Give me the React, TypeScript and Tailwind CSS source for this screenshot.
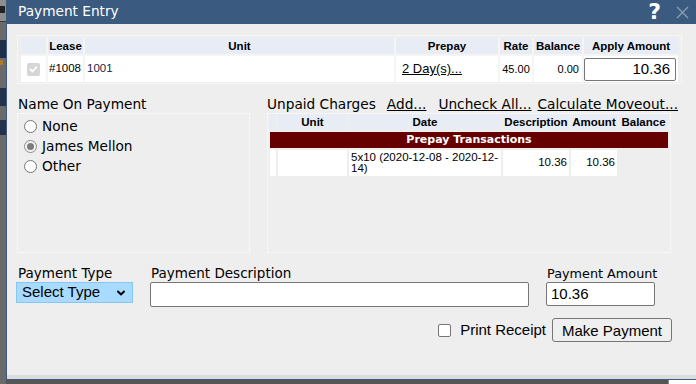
import { ChevronDown } from 'lucide-react';

const verdana = "font-['DejaVu_Sans',sans-serif]";
const arial = "font-['Liberation_Sans',Arial,sans-serif]";

const leaseCols = ['', 'Lease', 'Unit', 'Prepay', 'Rate', 'Balance', 'Apply Amount'];
const chargeCols = ['', 'Unit', 'Date', 'Description', 'Amount', 'Balance'];

function Radio({ checked }: { checked?: boolean }) {
  return (
    <span className={`w-[13px] h-[13px] rounded-full border flex items-center justify-center ${checked ? 'border-[#8a8a8a] bg-[#f4f4f4]' : 'border-[#767676] bg-white'}`}>
      {checked && <span className="w-[7px] h-[7px] rounded-full bg-[#7b7b7b]" />}
    </span>
  );
}

export default function App() {
  return (
    <div className="w-[696px] h-[384px] flex bg-[#5a5a5a] overflow-hidden">
      {/* sliver of the page behind the dialog */}
      <div className="w-[6px] flex flex-col bg-[#6a6a6a]">
        <div className="h-[22px] bg-[#8d8d8d] border-b border-[#3d3d3d] pt-[6px]"><div className="w-[5px] h-[7px] bg-[#222]" /></div>
        <div className="h-[18px]" />
        <div className="h-[18px] bg-[#1f2d4a]" />
        <div className="h-[8px] flex items-center"><span className="w-[3px] h-[5px] bg-[#b07a2a]" /></div>
        <div className="h-[22px]" />
        <div className="h-[18px] bg-[#23314f]" />
        <div className="h-[14px]" />
        <div className="h-[15px] bg-[#23314f]" />
        <div className="flex-1" />
      </div>

      <div className="flex-1 flex flex-col">
        <div className="h-[380px] flex flex-col border-l border-b border-[#3d5a7d] bg-[#eeeeee]">
          {/* title bar */}
          <div className="h-[24px] bg-[#3a5a7f] flex items-center pl-[11px] pr-[6px]">
            <span className={`${verdana} text-[13.7px] text-white leading-none`}>Payment Entry</span>
            <span className={`ml-auto ${verdana} text-[22px] font-bold text-white leading-none mr-[15px]`}>?</span>
            <svg width="13" height="13" viewBox="0 0 13 13" className="mr-[1px]">
              <path d="M1 1 L12 12 M12 1 L1 12" stroke="#8c9cb1" strokeWidth="1.4" />
            </svg>
          </div>

          <div className="flex-1 flex flex-col pt-[11px] pl-[10px] pr-[14px]">
            {/* lease table */}
            <div className="border border-dotted border-white px-[3px] pt-[2px] pb-[1px]">
              <div className={`grid grid-cols-[25px_35px_309px_102px_32px_48px_94px] gap-[2px] bg-[#f5f5f5] ${arial} text-black`}>
                {leaseCols.map((c, i) => (
                  <div key={i} className="h-[16px] bg-[#e8edf5] text-[11.5px] font-bold leading-[16px] text-center whitespace-nowrap">{c}</div>
                ))}
                <div className="h-[26px] bg-white flex items-center justify-center">
                  <span className="w-[13px] h-[13px] rounded-[2px] bg-[#d6d6d6] flex items-center justify-center">
                    <svg width="9" height="8" viewBox="0 0 9 8"><path d="M1 4 L3.5 6.5 L8 1.5" stroke="white" strokeWidth="1.8" fill="none" /></svg>
                  </span>
                </div>
                <div className="h-[26px] bg-white flex items-center pl-[1px] text-[11.5px]">#1008</div>
                <div className="h-[26px] bg-white flex items-center pl-[2px] text-[11.5px] text-[#1a2440]">1001</div>
                <div className="h-[26px] bg-white flex items-center pl-[6px] text-[13px] underline">2 Day(s)...</div>
                <div className="h-[26px] bg-white flex items-center justify-center text-[11px]">45.00</div>
                <div className="h-[26px] bg-white flex items-center justify-end pr-[3px] text-[11px]">0.00</div>
                <div className="h-[26px] bg-white flex items-center">
                  <div className="w-[92px] h-[23px] border border-[#767676] rounded-[2px] flex items-center justify-end pr-[5px] text-[15px]">10.36</div>
                </div>
              </div>
            </div>

            {/* name on payment + unpaid charges */}
            <div className="flex gap-[17px] mt-[12px]">
              <div className="w-[233px] flex flex-col">
                <div className={`${verdana} text-[13.7px] leading-[17px] h-[17px] pl-[1px] text-black`}>Name On Payment</div>
                <div className="h-[140px] border border-dotted border-white pl-[6px] pt-[2px]">
                  {[['None', false], ['James Mellon', true], ['Other', false]].map(([label, checked]) => (
                    <div key={label as string} className="h-[20px] flex items-center gap-[5px]">
                      <Radio checked={checked as boolean} />
                      <span className={`${verdana} text-[13.7px] text-black`}>{label}</span>
                    </div>
                  ))}
                </div>
              </div>

              <div className="w-[404px] flex flex-col">
                <div className={`${verdana} text-[13.7px] leading-[17px] h-[17px] flex whitespace-nowrap text-black`}>
                  <span>Unpaid Charges</span>
                  <span className="ml-[11px] underline">Add...</span>
                  <span className="ml-[12px] underline">Uncheck All...</span>
                  <span className="ml-[6px] underline">Calculate Moveout...</span>
                </div>
                <div className="h-[140px] border border-dotted border-white pl-[2px] pr-[2px]">
                  <div className={`grid grid-cols-[6px_69px_152px_66px_46px_49px] gap-[2px] ${arial} text-black`}>
                    {chargeCols.map((c, i) => (
                      <div key={i} className="h-[16px] bg-[#e8edf5] text-[11.5px] font-bold leading-[16px] text-center whitespace-nowrap">{c}</div>
                    ))}
                    <div className={`col-span-6 h-[16px] bg-[#660000] text-white text-center ${verdana} text-[11px] font-bold leading-[16px]`}>Prepay Transactions</div>
                    <div className="h-[26px] bg-white" />
                    <div className="h-[26px] bg-white" />
                    <div className="h-[26px] bg-white flex items-center pl-[2px] text-[11.5px] leading-[11px]">5x10 (2020-12-08 - 2020-12-14)</div>
                    <div className="h-[26px] bg-white flex items-center justify-end pr-[2px] text-[11.5px]">10.36</div>
                    <div className="h-[26px] bg-white flex items-center justify-end pr-[2px] text-[11.5px]">10.36</div>
                    <div className="h-[26px]" />
                  </div>
                </div>
              </div>
            </div>

            {/* payment fields */}
            <div className="flex items-start mt-[12px]">
              <div className="flex flex-col w-[117px] -ml-[1px]">
                <div className={`${verdana} text-[13.5px] leading-[17px] h-[17px] pl-[2px] text-black whitespace-nowrap`}>Payment Type</div>
                <div className={`h-[21px] bg-[#a8dbff] border border-[#86c6f2] flex items-center pl-[5px] pr-[5px] ${arial} text-[15px] text-black`}>
                  Select Type
                  <ChevronDown className="ml-auto w-[12px] h-[12px]" strokeWidth={4} />
                </div>
              </div>
              <div className="flex flex-col w-[379px] ml-[17px]">
                <div className={`${verdana} text-[13.5px] leading-[17px] h-[17px] pl-[1px] text-black whitespace-nowrap`}>Payment Description</div>
                <div className="h-[25px] bg-white border border-[#767676] rounded-[2px]" />
              </div>
              <div className="flex flex-col w-[109px] ml-[17px]">
                <div className={`${verdana} text-[12.8px] leading-[17px] h-[17px] pl-[1px] text-black whitespace-nowrap`}>Payment Amount</div>
                <div className={`h-[24px] bg-white border border-[#767676] rounded-[2px] flex items-center pl-[4px] ${arial} text-[15px] text-black`}>10.36</div>
              </div>
            </div>

            <div className={`flex items-center justify-end mt-[11px] mr-[10px] ${arial} text-[15px] text-black`}>
              <span className="w-[13px] h-[13px] rounded-[2px] border border-[#767676] bg-white" />
              <span className="ml-[9px]">Print Receipt</span>
              <button className="ml-[6px] w-[120px] h-[24px] bg-[#efefef] border border-[#767676] rounded-[3px] leading-none">Make Payment</button>
            </div>

            <div className="flex-1" />
          </div>
          <div className="h-[4px] bg-[#dcdcdc]" />
        </div>
        <div className="flex-1 flex">
          <div className="flex-1 bg-[#555555]" />
          <div className="w-[28px] bg-white border-l border-[#8a8a8a]" />
        </div>
      </div>
    </div>
  );
}
